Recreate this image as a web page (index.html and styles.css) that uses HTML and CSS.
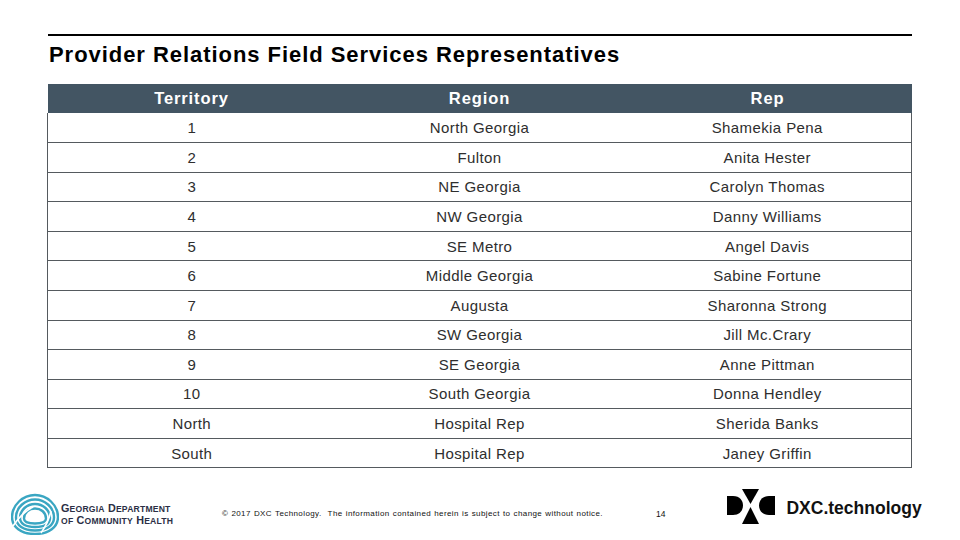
FILE: index.html
```html
<!DOCTYPE html>
<html lang="en">
<head>
<meta charset="utf-8">
<title>Provider Relations Field Services Representatives</title>
<link rel="stylesheet" href="styles.css">
</head>
<body>
<div class="slide">
  <div class="rule"></div>
  <h1 class="title">Provider Relations Field Services Representatives</h1>
  <table class="reps">
    <thead>
      <tr><th>Territory</th><th>Region</th><th>Rep</th></tr>
    </thead>
    <tbody>
      <tr><td>1</td><td>North Georgia</td><td>Shamekia Pena</td></tr>
      <tr><td>2</td><td>Fulton</td><td>Anita Hester</td></tr>
      <tr><td>3</td><td>NE Georgia</td><td>Carolyn Thomas</td></tr>
      <tr><td>4</td><td>NW Georgia</td><td>Danny Williams</td></tr>
      <tr><td>5</td><td>SE Metro</td><td>Angel Davis</td></tr>
      <tr><td>6</td><td>Middle Georgia</td><td>Sabine Fortune</td></tr>
      <tr><td>7</td><td>Augusta</td><td>Sharonna Strong</td></tr>
      <tr><td>8</td><td>SW Georgia</td><td>Jill Mc.Crary</td></tr>
      <tr><td>9</td><td>SE Georgia</td><td>Anne Pittman</td></tr>
      <tr><td>10</td><td>South Georgia</td><td>Donna Hendley</td></tr>
      <tr><td>North</td><td>Hospital Rep</td><td>Sherida Banks</td></tr>
      <tr><td>South</td><td>Hospital Rep</td><td>Janey Griffin</td></tr>
    </tbody>
  </table>
  <footer class="footer">
    <div class="dch">
      <svg class="dch-mark" viewBox="0 0 48 42" width="48" height="42" aria-hidden="true">
        <g fill="none" stroke="#3aa6c2" stroke-width="2.4">
          <path d="M24 2 C36 2 47 12 47 24 C47 34 38 41 24 41 C10 41 1 34 1 24 C1 12 12 2 24 2 Z"/>
          <path d="M24 6.5 C34 6.5 43 14.5 43 24.5 C43 32.5 35.5 37.5 24 37.5 C12.5 37.5 5 32.5 5 24.5 C5 14.5 14 6.5 24 6.5 Z"/>
          <path d="M24 11 C32 11 39 17 39 25 C39 31 33 34 24 34 C15 34 9 31 9 25 C9 17 16 11 24 11 Z"/>
          <path d="M24 15.5 C30 15.5 35 19.5 35 25.5 C35 29.5 30.5 30.5 24 30.5 C17.5 30.5 13 29.5 13 25.5 C13 19.5 18 15.5 24 15.5 Z"/>
        </g>
        <g fill="none" stroke="#ffffff" stroke-width="1.6">
          <path d="M2 33 C8 24 14 18 22 14"/>
          <path d="M30 40 C35 33 38 27 40 18"/>
        </g>
      </svg>
      <div class="dch-name">
        <span>G<small>EORGIA</small> D<small>EPARTMENT</small></span>
        <span><small>OF</small> C<small>OMMUNITY</small> H<small>EALTH</small></span>
      </div>
    </div>
    <p class="legal">© 2017 DXC Technology.&nbsp; The information contained herein is subject to change without notice.</p>
    <span class="page">14</span>
    <div class="dxc">
      <svg class="dxc-mark" viewBox="0 0 48 35" width="48" height="35" aria-hidden="true">
        <path d="M0 7 H6 C13 7 16 12 16 16.5 C16 21 13 26 6 26 H0 Z" fill="#000"/>
        <path d="M15 0 H32 L23.5 15 Z" fill="#000"/>
        <path d="M23.5 18 L32 35 H15 Z" fill="#000"/>
        <path d="M48 7 H42 C35 7 32 12 32 16.5 C32 21 35 26 42 26 H48 Z" fill="#000"/>
      </svg>
      <span class="dxc-name">DXC.technology</span>
    </div>
  </footer>
</div>
</body>
</html>
```
FILE: styles.css
```css
html, body {
  margin: 0;
  padding: 0;
  background: #ffffff;
}
body {
  width: 960px;
  height: 540px;
  overflow: hidden;
  font-family: "Liberation Sans", Arial, sans-serif;
  color: #1e1e1e;
}
.slide {
  display: flex;
  flex-direction: column;
  padding-top: 34px;
}
.rule {
  margin-left: 48px;
  width: 864px;
  height: 2px;
  background: #000;
}
.title {
  margin: 5px 0 0 49px;
  font-size: 22px;
  font-weight: bold;
  line-height: 28px;
  letter-spacing: 0.95px;
  color: #000;
}
.reps {
  margin: 15px 0 0 47px;
  width: 865px;
  border-collapse: collapse;
  table-layout: fixed;
  font-size: 15px;
  letter-spacing: 0.4px;
}
.reps th {
  background: #435563;
  color: #fff;
  font-size: 16.5px;
  font-weight: bold;
  letter-spacing: 0.9px;
  height: 29px;
  padding: 0;
  text-align: center;
}
.reps td {
  height: 29.58px;
  padding: 0;
  text-align: center;
  border-bottom: 1px solid #555a5e;
  box-sizing: border-box;
  color: #2e2e2e;
}
.reps tbody tr td:first-child { border-left: 1px solid #555a5e; }
.reps tbody tr td:last-child { border-right: 1px solid #555a5e; }
.footer {
  margin-top: 21px;
  display: flex;
  align-items: flex-start;
  height: 46px;
}
.dch {
  display: flex;
  align-items: center;
  margin: 4px 0 0 11px;
  width: 200px;
}
.dch-mark { flex: none; }
.dch-name {
  display: flex;
  flex-direction: column;
  margin-left: 2px;
  margin-top: 2px;
  font-size: 10.8px;
  line-height: 11px;
  font-weight: bold;
  color: #2b2f45;
  letter-spacing: 0.2px;
  white-space: nowrap;
}
.dch-name small { font-size: 8.6px; }
.legal {
  margin: 20px 0 0 11px;
  font-size: 8px;
  line-height: 10px;
  letter-spacing: 0.4px;
  word-spacing: 0.5px;
  color: #111;
  width: 434px;
  white-space: nowrap;
}
.page {
  margin-top: 20px;
  font-size: 8.5px;
  line-height: 10px;
  color: #111;
}
.dxc {
  display: flex;
  align-items: center;
  margin-left: 62px;
}
.dxc-mark { flex: none; }
.dxc-name {
  margin: 4px 0 0 11px;
  font-size: 17.5px;
  font-weight: bold;
  color: #111;
  letter-spacing: 0;
}
```
